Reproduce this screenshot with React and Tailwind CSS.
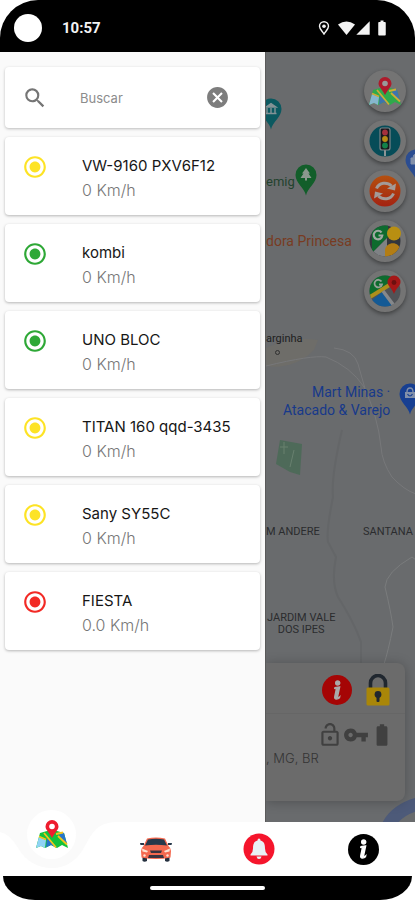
import React, { useState } from "react";
import {
  MdSearch,
  MdCancel,
  MdRadioButtonChecked,
  MdOutlineLockOpen,
  MdVpnKey,
  MdBatteryFull,
  MdSignalCellular4Bar,
} from "react-icons/md";
import { BsInfoLg } from "react-icons/bs";

const vehicles = [
  { name: "VW-9160 PXV6F12", speed: "0 Km/h", tone: "text-[#fde325]" },
  { name: "kombi", speed: "0 Km/h", tone: "text-[#2ea836]" },
  { name: "UNO BLOC", speed: "0 Km/h", tone: "text-[#2ea836]" },
  { name: "TITAN 160 qqd-3435", speed: "0 Km/h", tone: "text-[#fde325]" },
  { name: "Sany SY55C", speed: "0 Km/h", tone: "text-[#fde325]" },
  { name: "FIESTA", speed: "0.0 Km/h", tone: "text-[#f22a25]" },
];

function MapIcon({ className, dim }) {
  return (
    <svg viewBox="0 0 32 29" className={className} aria-hidden="true">
      <g opacity={dim ? 0.7 : 1}>
        <path d="M4 13 L11 11 L21 11 L28 13 L32 28 L26 25 L21 28 L15 25 L9 28 L5 26 L0 28 Z" fill="#12c23b" />
        <path d="M3 17 L10 20 L9 28 L5 26 L0 28 Z" fill="#8fd3f5" />
        <path d="M11 18 L21 28 L15 25 L10 27.500 Z" fill="#2774c9" />
        <path d="M24 12 L28 13 L31 24 L23 17 Z" fill="#2774c9" />
        <path d="M3 16.500 L10 19.500 M8 13 L20 27.500 M22 16 L31 24.500 M20 14 L27 12.500" stroke="#f3c51b" strokeWidth="1.800" fill="none" />
      </g>
      <path d="M16 18 C13 12 9.500 10 9.500 6.500 A6.500 6.500 0 0 1 22.500 6.500 C22.500 10 19 12 16 18 Z" fill={dim ? "#ad1b2b" : "#ee1c2e"} />
      <circle cx="16" cy="6.500" r="2.800" fill={dim ? "#999" : "#fff"} />
    </svg>
  );
}

function TrafficIcon() {
  return (
    <svg viewBox="0 0 32 32" className="size-8" aria-hidden="true">
      <circle cx="16" cy="16" r="15.500" fill="#064c58" />
      <path d="M16 25 V31" stroke="#8a9496" strokeWidth="2" />
      <rect x="11" y="3" width="10" height="22" rx="2" fill="#17191d" stroke="#7c8487" strokeWidth="1.200" />
      <circle cx="16" cy="7.500" r="2.900" fill="#a5303c" />
      <circle cx="16" cy="14" r="2.900" fill="#b98a13" />
      <circle cx="16" cy="20.500" r="2.900" fill="#12824a" />
    </svg>
  );
}

function RefreshIcon() {
  return (
    <svg viewBox="0 0 32 32" className="size-8" aria-hidden="true">
      <defs>
        <linearGradient id="refreshFill" x1="0" y1="0" x2="0" y2="1">
          <stop offset="0" stopColor="#b5500f" />
          <stop offset="1" stopColor="#a32312" />
        </linearGradient>
      </defs>
      <circle cx="16" cy="16" r="15.500" fill="url(#refreshFill)" />
      <g fill="none" stroke="#a39b98" strokeWidth="3">
        <path d="M7.500 13.500 C10 7.500 18 6.500 22.500 11" />
        <path d="M24.500 18.500 C22 24.500 14 25.500 9.500 21" />
      </g>
      <path d="M27 8.500 L26 15.500 L18 13.500 Z M5 23.500 L6 16.500 L14 18.500 Z" fill="#a39b98" />
    </svg>
  );
}

function StreetIcon() {
  return (
    <svg viewBox="0 0 32 32" className="size-8" aria-hidden="true">
      <defs>
        <clipPath id="streetClip"><circle cx="16" cy="16" r="15.500" /></clipPath>
      </defs>
      <g clipPath="url(#streetClip)">
        <rect width="32" height="32" fill="#33363d" />
        <path d="M3 0 H19 V12 L4 27 L3 24 Z" fill="#0d6b2e" />
        <path d="M3 28 L18 13 V32 H6 Z" fill="#7f8285" />
        <path d="M16 32 V25 C17 16 31 16 31 25 V32 Z" fill="#b37d14" />
      </g>
      <circle cx="25" cy="8.500" r="7" fill="#b88f12" />
      <path d="M12.500 7.500 A4.300 4.300 0 1 0 13.300 10.500 H9.500" fill="none" stroke="#a0a8a2" strokeWidth="2.200" />
    </svg>
  );
}

function GMapIcon() {
  return (
    <svg viewBox="0 0 32 32" className="size-8" aria-hidden="true">
      <defs>
        <clipPath id="gmapClip"><circle cx="16" cy="16" r="15.500" /></clipPath>
      </defs>
      <g clipPath="url(#gmapClip)">
        <rect width="32" height="32" fill="#505357" />
        <path d="M0 0 H22 V8 L2 22 L0 20 Z" fill="#0d6b2e" />
        <path d="M2 26 L13 17 L24 32 H8 Z" fill="#145a95" />
        <path d="M0 22.500 L22 9" stroke="#ad8f1c" strokeWidth="4" />
        <path d="M14 16 L26 32" stroke="#85888b" strokeWidth="3.500" />
      </g>
      <path d="M25 19 C23 13 18.500 11 18.500 7 A6.500 6.500 0 0 1 31.500 7 C31.500 11 27 13 25 19 Z" fill="#a51717" />
      <circle cx="25" cy="7.500" r="2.400" fill="#6c1010" />
      <path d="M12.500 6.500 A3.800 3.800 0 1 0 13 9.500 H10" fill="none" stroke="#96a098" strokeWidth="1.800" />
    </svg>
  );
}

function CarIcon() {
  return (
    <svg viewBox="0 0 32 25" className="h-[25px] w-8" aria-hidden="true">
      <path d="M2.500 19 H7 V24 Q4.500 25.500 2.500 24 Z M25 19 H29.500 V24 Q27 25.500 25 24 Z" fill="#25303f" />
      <path d="M7 1.500 Q16 -0.500 25 1.500 L28.500 9 Q31 11 31 14 L30.500 20.500 Q16 23.500 1.500 20.500 L1 14 Q1 11 3.500 9 Z" fill="#f4694f" />
      <path d="M8 2.500 Q16 1 24 2.500 L27 8.500 Q16 7 5 8.500 Z" fill="#26384a" />
      <path d="M0 6 L4 6 L4 8 L0.500 8 Z M32 6 L28 6 L28 8 L31.500 8 Z" fill="#26384a" />
      <path d="M2 11.500 L8 14 L7 15.500 L2.500 14.500 Z M30 11.500 L24 14 L25 15.500 L29.500 14.500 Z" fill="#fde3d3" />
      <path d="M10 13.500 H22 L21 16 H11 Z M9 18 H23 L24 21 H8 Z" fill="#3a3440" />
      <circle cx="4.500" cy="18.500" r="1.200" fill="#fde3d3" />
      <circle cx="27.500" cy="18.500" r="1.200" fill="#fde3d3" />
    </svg>
  );
}

function BellIcon() {
  return (
    <svg viewBox="0 0 32 32" className="size-8" aria-hidden="true">
      <circle cx="16" cy="16" r="15.500" fill="#f5152c" />
      <path d="M16 5.500 Q17.500 5.500 17.500 7.500 C21.500 8.500 22 12 22 15.500 Q22 19.500 24.500 21.500 V22.500 H7.500 V21.500 Q10 19.500 10 15.500 C10 12 10.500 8.500 14.500 7.500 Q14.500 5.500 16 5.500 Z" fill="#e9f0f5" />
      <path d="M13.500 23.500 H18.500 Q18 26 16 26 T13.500 23.500 Z" fill="#e9f0f5" />
    </svg>
  );
}

function PadlockIcon() {
  return (
    <svg viewBox="0 0 24 32" className="h-8 w-6" aria-hidden="true">
      <path d="M4.500 15 V9 A7.500 7.500 0 0 1 19.500 9 V15" fill="none" stroke="#20272f" strokeWidth="3.600" />
      <rect x="0.500" y="13.500" width="23" height="18" rx="1.500" fill="#a98608" />
      <circle cx="12" cy="20.500" r="3.400" fill="#20272f" />
      <rect x="10.500" y="21" width="3" height="7" rx="1" fill="#20272f" />
    </svg>
  );
}

function Pin({ fill, className, children }) {
  return (
    <svg viewBox="0 0 22 32" className={className} aria-hidden="true">
      <path d="M11 31.500 C9.500 24 0.500 19 0.500 11 A10.500 10.500 0 0 1 21.500 11 C21.500 19 12.500 24 11 31.500 Z" fill={fill} />
      {children}
    </svg>
  );
}

function StatusBar() {
  return (
    <header className="flex h-[52px] shrink-0 items-center rounded-t-[38px] bg-black pl-[14px] pr-[24px] pt-1 text-[#f3f3f3]">
      <span className="size-7 rounded-full bg-white" />
      <span className="ml-5 font-['Roboto',sans-serif] text-[15px] font-bold leading-5">10:57</span>
      <div className="ml-auto flex items-center">
        <svg viewBox="0 0 12 14" className="mr-2 h-[14px] w-3" aria-hidden="true">
          <path d="M6 13 C4 10 1.500 8 1.500 5.300 A4.500 4.500 0 0 1 10.500 5.300 C10.500 8 8 10 6 13 Z" fill="none" stroke="currentColor" strokeWidth="1.400" />
          <circle cx="6" cy="5.300" r="1.800" fill="currentColor" />
        </svg>
        <svg viewBox="0 0 17 14" className="h-[14px] w-[17px]" aria-hidden="true">
          <path d="M0 3.500 Q8.500 -2.500 17 3.500 L8.500 14 Z" fill="currentColor" />
        </svg>
        <MdSignalCellular4Bar className="size-4" />
        <MdBatteryFull className="ml-0.5 size-[18px]" />
      </div>
    </header>
  );
}

function Drawer() {
  const [query, setQuery] = useState("");
  return (
    <aside className="flex w-[265px] shrink-0 flex-col gap-[9px] bg-[#fafafa] px-[5px] pt-[15px]">
      <form
        className="flex h-[61px] shrink-0 items-center rounded bg-white pl-[17px] pr-[30px] shadow-[0_1px_3px_rgba(0,0,0,0.25)]"
        onSubmit={(e) => e.preventDefault()}
      >
        <label htmlFor="search" aria-label="Buscar">
          <MdSearch className="size-[26px] text-[#757575]" />
        </label>
        <input
          id="search"
          type="text"
          value={query}
          onChange={(e) => setQuery(e.target.value)}
          placeholder="Buscar"
          className="ml-8 w-0 min-w-0 flex-1 bg-transparent text-[13px] leading-5 outline-none placeholder:text-[#8c8c8c]"
        />
        <button type="button" aria-label="Limpar" onClick={() => setQuery("")}>
          <MdCancel className="size-[25px] text-[#7d7d7d]" />
        </button>
      </form>
      <ul className="flex flex-col gap-[9px]">
        {vehicles.map((v) => (
          <li key={v.name}>
            <button
              type="button"
              className="flex w-full items-start rounded bg-white pb-[13px] pl-[17px] pt-[17px] text-left shadow-[0_1px_3px_rgba(0,0,0,0.28)]"
            >
              <MdRadioButtonChecked className={`size-[26px] shrink-0 ${v.tone}`} />
              <span className="ml-[34px] flex flex-col">
                <span className="whitespace-nowrap text-[15px] leading-6 text-[#161616]">{v.name}</span>
                <span className="text-base leading-6 font-light text-[#777]">{v.speed}</span>
              </span>
            </button>
          </li>
        ))}
      </ul>
    </aside>
  );
}

function MapCanvas() {
  return (
    <div className="absolute inset-0 font-['Roboto',sans-serif]">
      <svg viewBox="0 0 150 770" className="absolute left-0 top-0 h-[770px] w-[150px]" aria-hidden="true">
        <path d="M0 296 Q25 284 52 288 L48 298 Q28 318 0 314 Z" fill="#6e6d69" />
        <path d="M0 314 Q45 303 60 305 Q85 315 98 335 Q112 365 115 395 Q116 410 126 425 Q138 438 150 442 M68 296 Q88 298 92 312 L100 340" fill="none" stroke="#77787a" strokeWidth="1" />
        <path d="M76 378 Q65 425 67 445 Q60 480 62 490 L70 505 Q65 530 72 545 Q88 570 95 590 L95 612" fill="none" stroke="#646668" strokeWidth="2" />
        <path d="M150 508 L146 505 Q120 520 119 535 Q125 560 127 575 Q122 600 118 612" fill="none" stroke="#7a7c7d" strokeWidth="1" />
        <path d="M14 388 L36 392 L34 423 L24 420 L10 412 Z" fill="#4e6a59" />
        <path d="M14 395 H22 M18 390 V402 M28 398 L24 415" stroke="#68806f" strokeWidth="1" />
        <path d="M122 774 Q130 758 152 752" fill="none" stroke="#4d5a79" strokeWidth="13" />
      </svg>
      <Pin fill="#0b5960" className="absolute -left-[6px] top-[46px] h-8 w-[22px]">
        <path d="M6 9 L11 5.500 L16 9 Z M7 10 V15 M11 10 V15 M15 10 V15 M5.500 15.500 H16.500" fill="#849396" stroke="#849396" strokeWidth="1.400" />
      </Pin>
      <Pin fill="#125e2a" className="absolute left-[29px] top-28 h-8 w-[22px]">
        <path d="M11 4 L15 9.500 H13.500 L16.500 14 H12 V16.500 H10 V14 H5.500 L8.500 9.500 H7 Z" fill="#8b988e" />
      </Pin>
      <Pin fill="#2b4d91" className="absolute left-[139px] top-[97px] h-8 w-[22px]">
        <path d="M6 9 H16 V15 H6 Z M8 9 Q8 5 11 5 T14 9" fill="#8290aa" stroke="#8290aa" />
      </Pin>
      <Pin fill="#173f92" className="absolute left-[133px] top-[331px] h-8 w-[22px]">
        <path d="M6 9 H16 V15 H6 Z" fill="#8290aa" />
        <path d="M8 9 Q8 5 11 5 T14 9" fill="none" stroke="#8290aa" strokeWidth="1.400" />
        <path d="M8.500 11 Q11 15 13.500 11" fill="none" stroke="#173f92" strokeWidth="1.200" />
      </Pin>
      <span className="absolute left-0 top-[120px] text-[13px] leading-5 text-[#23422d]">emig</span>
      <span className="absolute left-0 top-[179px] whitespace-nowrap text-sm leading-5 text-[#783b22]">dora Princesa</span>
      <span className="absolute left-0 top-[279px] text-[11px] leading-4 text-[#202020]">arginha</span>
      <span className="absolute left-[9px] top-[298px] size-[5px] rounded-full border border-[#303030]" />
      <span className="absolute left-[17px] top-[331px] whitespace-nowrap text-right text-sm leading-[18px] text-[#17398a]">
        Mart Minas ·<br />Atacado &amp; Varejo
      </span>
      <span className="absolute left-0 top-[472px] whitespace-nowrap text-[11px] leading-4 text-[#2b2c2e]">M ANDERE</span>
      <span className="absolute left-[97px] top-[472px] whitespace-nowrap text-[11px] leading-4 text-[#2b2c2e]">SANTANA</span>
      <span className="absolute left-px top-[560px] whitespace-nowrap text-center text-[11px] leading-3 text-[#2b2c2e]">
        JARDIM VALE<br />DOS IPES
      </span>
    </div>
  );
}

const fab =
  "flex size-[42px] items-center justify-center rounded-full bg-[#747474] shadow-[0_2px_4px_rgba(0,0,0,0.4)]";

function MapPanel() {
  return (
    <section className="relative flex min-w-0 flex-1 flex-col justify-between overflow-hidden border-l border-[#5a5a5a] bg-[#696b6d]">
      <MapCanvas />
      <div className="relative flex flex-col items-end gap-2 pr-[9px] pt-[18px]">
        <button type="button" aria-label="Mapa" className={fab}><MapIcon className="h-[29px] w-8" dim /></button>
        <button type="button" aria-label="Trânsito" className={fab}><TrafficIcon /></button>
        <button type="button" aria-label="Atualizar" className={fab}><RefreshIcon /></button>
        <button type="button" aria-label="Street View" className={fab}><StreetIcon /></button>
        <button type="button" aria-label="Google Maps" className={fab}><GMapIcon /></button>
      </div>
      <div className="relative mb-[21px] mr-[10px] flex h-[138px] flex-col rounded-r-lg bg-[#6b6b6b] shadow-[0_1px_12px_rgba(0,0,0,0.25)]">
        <div className="flex h-[51px] items-center justify-end gap-[14px] border-b border-[#666] pr-[15px] pt-1">
          <button type="button" aria-label="Informações" className="flex size-[30px] items-center justify-center rounded-full bg-[#a50505] text-[#aaa]">
            <BsInfoLg className="size-6" stroke="currentColor" strokeWidth="1" />
          </button>
          <button type="button" aria-label="Bloquear"><PadlockIcon /></button>
        </div>
        <div className="flex items-center justify-end pr-[10px] pt-2 text-[#404040]">
          <MdOutlineLockOpen className="size-[26px]" />
          <MdVpnKey className="size-[26px]" />
          <MdBatteryFull className="size-[26px]" />
        </div>
        <p className="text-[13px] font-light leading-5 text-[#343434]">, MG, BR</p>
      </div>
    </section>
  );
}

function BottomNav() {
  return (
    <nav className="relative grid h-[54px] shrink-0 grid-cols-4 items-center bg-white">
      <svg viewBox="0 0 120 54" className="absolute left-0 top-0 h-[54px] w-[120px]" aria-hidden="true">
        <path d="M0 0 H120 C98 0 94 8 86 22 Q74 46 52 46 Q30 46 18 26 Q10 12 0 10 Z" fill="#fafafa" />
      </svg>
      <a href="#mapa" aria-label="Mapa" className="relative -mt-[30px] flex size-[49px] items-center justify-center justify-self-center rounded-full bg-white">
        <MapIcon className="h-[29px] w-8" />
      </a>
      <a href="#veiculos" aria-label="Veículos" className="justify-self-center"><CarIcon /></a>
      <a href="#alertas" aria-label="Alertas" className="justify-self-center"><BellIcon /></a>
      <a href="#info" aria-label="Informações" className="flex size-[31px] items-center justify-center justify-self-center rounded-full bg-black text-white">
        <BsInfoLg className="size-6" stroke="currentColor" strokeWidth="1" />
      </a>
    </nav>
  );
}

export default function App() {
  return (
    <div className="flex min-h-screen flex-col bg-white font-['Inter','Noto_Sans',sans-serif]">
      <StatusBar />
      <main className="flex flex-1">
        <Drawer />
        <MapPanel />
      </main>
      <BottomNav />
      <footer className="mx-[3px] flex h-6 shrink-0 items-center justify-center rounded-b-[32px_24px] bg-black">
        <span className="h-1 w-[115px] rounded-sm bg-white" />
      </footer>
    </div>
  );
}
